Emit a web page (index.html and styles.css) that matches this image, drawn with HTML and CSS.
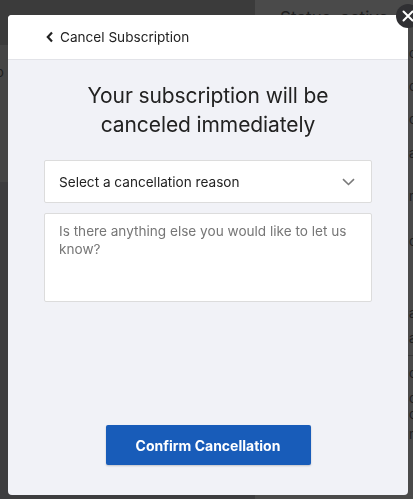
FILE: index.html
```html
<!DOCTYPE html>
<html lang="en">
<head>
    <meta charset="UTF-8">
    <meta name="viewport" content="width=device-width, initial-scale=1.0">
    <title>Cancel Subscription</title>
    <link rel="stylesheet" href="styles.css">
</head>
<body>
    <div class="page">
        <aside class="page-side">
            <div class="side-top"></div>
            <div class="side-panel"><span>o</span></div>
            <div class="side-rest"></div>
        </aside>
        <main class="page-main">
            <p class="page-title">Status: active, which</p>
            <div class="page-list">
                <p class="r1">c</p>
                <p class="r2">c</p>
                <p class="r3">c</p>
                <p class="r4">a</p>
                <p class="r5">r</p>
                <p class="r6">c</p>
                <p class="r7">a</p>
                <p class="r8">a</p>
                <hr>
                <p class="r9">c</p>
                <p class="r10">c</p>
                <p class="r11">ca</p>
                <p class="r12">n</p>
            </div>
        </main>
    </div>

    <div class="overlay">
        <div class="modal">
            <button class="modal-close" aria-label="Close">
                <svg width="12" height="12" viewBox="0 0 12 12">
                    <path d="M1.5 1.5 L10.5 10.5 M10.5 1.5 L1.5 10.5" stroke="#fff" stroke-width="2" stroke-linecap="round"/>
                </svg>
            </button>

            <header class="modal-header">
                <button class="back-btn">
                    <svg width="8" height="12" viewBox="0 0 8 12">
                        <path d="M6 1.5 L1.8 6 L6 10.5" fill="none" stroke="#222" stroke-width="2.2"/>
                    </svg>
                    Cancel Subscription
                </button>
            </header>

            <div class="modal-body">
                <h2>Your subscription will be canceled immediately</h2>

                <div class="select-box">
                    <span>Select a cancellation reason</span>
                    <svg width="13" height="8" viewBox="0 0 13 8">
                        <path d="M1 1.2 L6.5 6.5 L12 1.2" fill="none" stroke="#7a7a7a" stroke-width="1.6"/>
                    </svg>
                </div>

                <textarea placeholder="Is there anything else you would like to let us know?"></textarea>

                <div class="actions">
                    <button class="confirm-btn">Confirm Cancellation</button>
                </div>
            </div>
        </div>
    </div>
</body>
</html>
```

FILE: styles.css
```css
* {
    margin: 0;
    padding: 0;
    box-sizing: border-box;
    font-family: 'Inter', 'Liberation Sans', sans-serif;
}

body {
    width: 413px;
    height: 499px;
    overflow: hidden;
    background: #3d3d3f;
}

.page {
    display: grid;
    grid-template-columns: 255px 1fr;
    height: 499px;
}

.page-side {
    display: flex;
    flex-direction: column;
}

.side-top {
    height: 45px;
    background: #3b3b3b;
}

.side-panel {
    height: 137px;
    background: #454545;
    color: #1e1e1e;
    font-size: 13px;
    padding-top: 19px;
    margin-left: -4px;
}

.side-rest {
    flex: 1;
    background: #3d3d3f;
}

.page-main {
    background: #4a4a4a;
    color: #1f1f1f;
    font-size: 13px;
    overflow: hidden;
}

.page-title {
    font-size: 17px;
    padding: 8px 0 0 25px;
    white-space: nowrap;
    height: 45px;
}

.page-list {
    padding-left: 154px;
}

.page-list p {
    line-height: 16px;
    white-space: nowrap;
}

.page-list .r1 { margin-top: 0; }
.page-list .r2 { margin-top: 17px; }
.page-list .r3 { margin-top: 17px; }
.page-list .r4 { margin-top: 18px; }
.page-list .r5 { margin-top: 27px; }
.page-list .r6 { margin-top: 29px; }
.page-list .r7 { margin-top: 56px; }
.page-list .r8 { margin-top: 9px; }
.page-list .r9 { margin-top: 9px; }
.page-list .r10 { margin-top: 9px; }
.page-list .r11 { margin-top: 0; }
.page-list .r12 { margin-top: 4px; }

.page-list hr {
    border: none;
    border-top: 1px solid #3a3a3a;
    margin-top: 9px;
    margin-left: -160px;
}

.overlay {
    position: fixed;
    inset: 0;
}

.modal {
    position: relative;
    margin: 15px 0 0 8px;
    width: 400px;
    height: 480px;
    background: #f1f2f7;
    border-radius: 4px;
    display: flex;
    flex-direction: column;
}

.modal-close {
    position: absolute;
    top: -11px;
    right: -12px;
    width: 24px;
    height: 24px;
    border-radius: 50%;
    background: #303033;
    border: none;
    display: flex;
    align-items: center;
    justify-content: center;
}

.modal-header {
    height: 45px;
    background: #fff;
    border-bottom: 1px solid #e2e3e8;
    border-radius: 4px 4px 0 0;
    display: flex;
    align-items: center;
    padding-left: 38px;
}

.back-btn {
    background: none;
    border: none;
    display: flex;
    align-items: center;
    gap: 6px;
    font-size: 13.6px;
    color: #222;
}

.modal-body {
    flex: 1;
    display: flex;
    flex-direction: column;
    padding: 21px 36px 30px;
}

h2 {
    font-size: 21px;
    font-weight: 400;
    line-height: 29px;
    color: #222;
    text-align: center;
    padding: 0 30px;
    letter-spacing: -0.1px;
}

.select-box {
    margin-top: 21px;
    height: 43px;
    background: #fff;
    border: 1px solid #dcdcdc;
    border-radius: 2px;
    display: flex;
    align-items: center;
    justify-content: space-between;
    padding: 0 16px 0 14px;
    font-size: 13.6px;
    color: #222;
}

textarea {
    margin-top: 10px;
    height: 89px;
    resize: none;
    background: #fff;
    border: 1px solid #dcdcdc;
    border-radius: 2px;
    padding: 8px 14px;
    font-size: 13.6px;
    line-height: 18px;
    color: #222;
}

textarea::placeholder {
    color: #767676;
}

.actions {
    margin-top: auto;
    display: flex;
    justify-content: center;
}

.confirm-btn {
    width: 205px;
    height: 40px;
    background: #185cb9;
    color: #fff;
    border: none;
    border-radius: 2px;
    font-size: 14px;
    font-weight: 700;
    box-shadow: 0 1px 2px rgba(0,0,0,0.2);
}
```
